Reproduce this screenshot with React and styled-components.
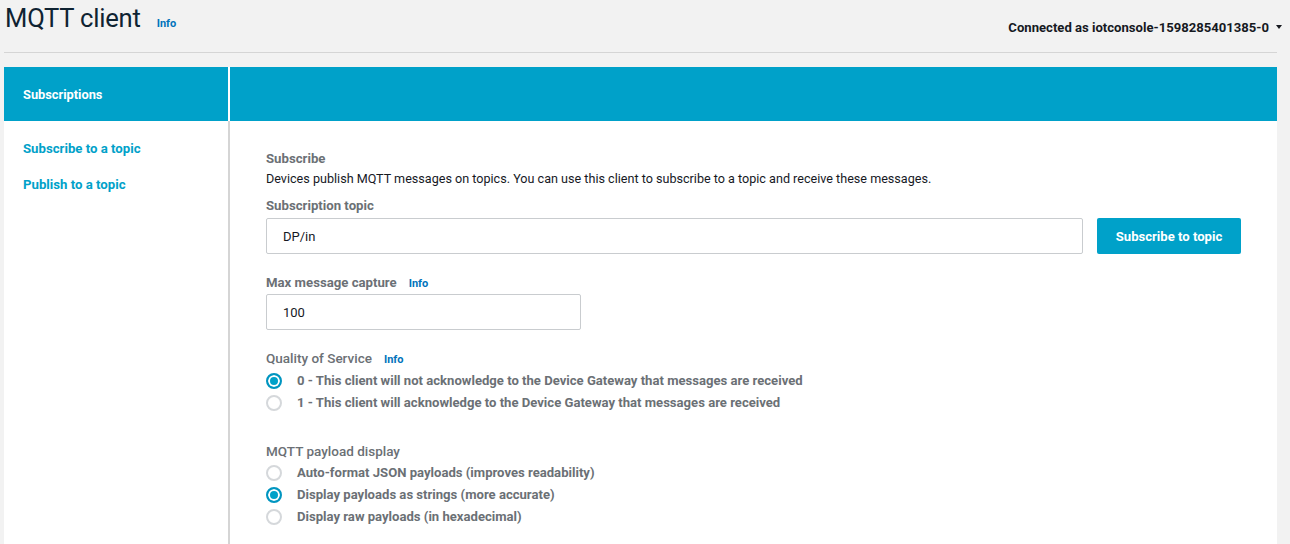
import React from "react";
import styled, { createGlobalStyle } from "styled-components";

const Global = createGlobalStyle`
  html, body { margin: 0; padding: 0; background: #f2f2f2; }
  body { font-family: Roboto, "Noto Sans", "Liberation Sans", sans-serif; color: #16191f; }
  * { box-sizing: border-box; }
`;

const Page = styled.div`
  width: 1290px;
  height: 544px;
  overflow: hidden;
  padding: 0 13px 0 4px;
`;

const TopBar = styled.div`
  display: flex;
  align-items: flex-start;
  justify-content: space-between;
  height: 53px;
  border-bottom: 1px solid #d5d5d5;
`;

const TitleRow = styled.div`
  display: flex;
  align-items: baseline;
  gap: 16px;
  padding-top: 3px;
  padding-left: 1px;
`;

const Title = styled.h1`
  margin: 0;
  font-size: 25.6px;
  font-weight: 400;
  color: #0f2332;
  letter-spacing: -0.2px;
`;

const Info = styled.a`
  font-size: 11px;
  font-weight: 700;
  color: #0073bb;
  text-decoration: none;
  margin-left: ${p => p.$ml || 0}px;
`;

const Connected = styled.div`
  display: flex;
  align-items: center;
  gap: 7px;
  margin-top: 20px;
  margin-right: -5px;
  font-size: 13.1px;
  font-weight: 700;
  color: #16191f;
`;

const Caret = styled.span`
  width: 0;
  height: 0;
  border-left: 3.5px solid transparent;
  border-right: 3.5px solid transparent;
  border-top: 4px solid #16191f;
  margin-top: -2px;
`;

const Panel = styled.div`
  margin-top: 14px;
  display: grid;
  grid-template-columns: 226px 1fr;
  grid-template-rows: 54px 1fr;
  height: 480px;
`;

const HeadLeft = styled.div`
  background: #00a1c9;
  color: #fff;
  font-size: 12.8px;
  font-weight: 700;
  display: flex;
  align-items: center;
  padding-left: 19px;
  border-right: 2px solid #fff;
`;

const HeadRight = styled.div`
  background: #00a1c9;
`;

const Sidebar = styled.nav`
  background: #fff;
  border-right: 2px solid #d5d5d5;
  padding: 20px 19px;
  display: flex;
  flex-direction: column;
  gap: 20px;
`;

const NavLink = styled.a`
  font-size: 13.2px;
  font-weight: 700;
  color: #00a1c9;
  text-decoration: none;
  line-height: 16px;
`;

const Content = styled.div`
  background: #fff;
  padding: 30px 36px 0 36px;
`;

const Label = styled.div`
  display: flex;
  align-items: baseline;
  font-size: ${p => (p.$light ? 13.5 : 13.2)}px;
  font-weight: ${p => (p.$light ? 500 : 700)};
  color: #6b7075;
  line-height: 16px;
  margin-top: ${p => p.$mt || 0}px;
`;

const Desc = styled.p`
  margin: 4px 0 0;
  font-size: 12.6px;
  color: #16191f;
  line-height: 16px;
`;

const InputRow = styled.div`
  display: flex;
  gap: 14px;
  margin-top: ${p => p.$mt ?? 4}px;
`;

const Input = styled.div`
  width: ${p => p.$w}px;
  height: 36px;
  border: 1px solid #c9cccf;
  border-radius: 2px;
  display: flex;
  align-items: center;
  padding-left: 16px;
  font-size: 13px;
  color: #16191f;
`;

const Button = styled.button`
  width: 144px;
  height: 36px;
  border: none;
  border-radius: 2px;
  background: #00a1c9;
  color: #fff;
  font-family: inherit;
  font-size: 13.1px;
  font-weight: 700;
`;

const RadioGroup = styled.div`
  display: flex;
  flex-direction: column;
  gap: 6px;
  margin-top: ${p => p.$mt ?? 5}px;
`;

const RadioRow = styled.label`
  display: flex;
  align-items: center;
  gap: 15px;
  font-size: 13.1px;
  font-weight: 700;
  color: #6b7075;
  line-height: 16px;
`;

const Circle = styled.span`
  width: 16px;
  height: 16px;
  border-radius: 50%;
  border: 2px solid ${p => (p.$on ? "#0095c0" : "#d5d8db")};
  background: ${p => (p.$on ? "#00a1c9" : "#fff")};
  box-shadow: ${p => (p.$on ? "inset 0 0 0 2px #fff" : "none")};
  flex: none;
`;

function Radio({ on, children }) {
  return (
    <RadioRow>
      <Circle $on={on} />
      {children}
    </RadioRow>
  );
}

export default function App() {
  return (
    <>
      <Global />
      <Page>
        <TopBar>
          <TitleRow>
            <Title>MQTT client</Title>
            <Info>Info</Info>
          </TitleRow>
          <Connected>
            Connected as iotconsole-1598285401385-0 <Caret />
          </Connected>
        </TopBar>
        <Panel>
          <HeadLeft>Subscriptions</HeadLeft>
          <HeadRight />
          <Sidebar>
            <NavLink>Subscribe to a topic</NavLink>
            <NavLink>Publish to a topic</NavLink>
          </Sidebar>
          <Content>
            <Label>Subscribe</Label>
            <Desc>
              Devices publish MQTT messages on topics. You can use this client to subscribe to a topic and receive these messages.
            </Desc>
            <Label $mt={11}>Subscription topic</Label>
            <InputRow>
              <Input $w={817}>DP/in</Input>
              <Button>Subscribe to topic</Button>
            </InputRow>
            <Label $mt={21}>
              Max message capture <Info $ml={12}>Info</Info>
            </Label>
            <InputRow $mt={2}>
              <Input $w={315}>100</Input>
            </InputRow>
            <Label $mt={20} $light>
              Quality of Service <Info $ml={12}>Info</Info>
            </Label>
            <RadioGroup>
              <Radio on>0 - This client will not acknowledge to the Device Gateway that messages are received</Radio>
              <Radio>1 - This client will acknowledge to the Device Gateway that messages are received</Radio>
            </RadioGroup>
            <Label $mt={32} $light>MQTT payload display</Label>
            <RadioGroup $mt={6}>
              <Radio>Auto-format JSON payloads (improves readability)</Radio>
              <Radio on>Display payloads as strings (more accurate)</Radio>
              <Radio>Display raw payloads (in hexadecimal)</Radio>
            </RadioGroup>
          </Content>
        </Panel>
      </Page>
    </>
  );
}
